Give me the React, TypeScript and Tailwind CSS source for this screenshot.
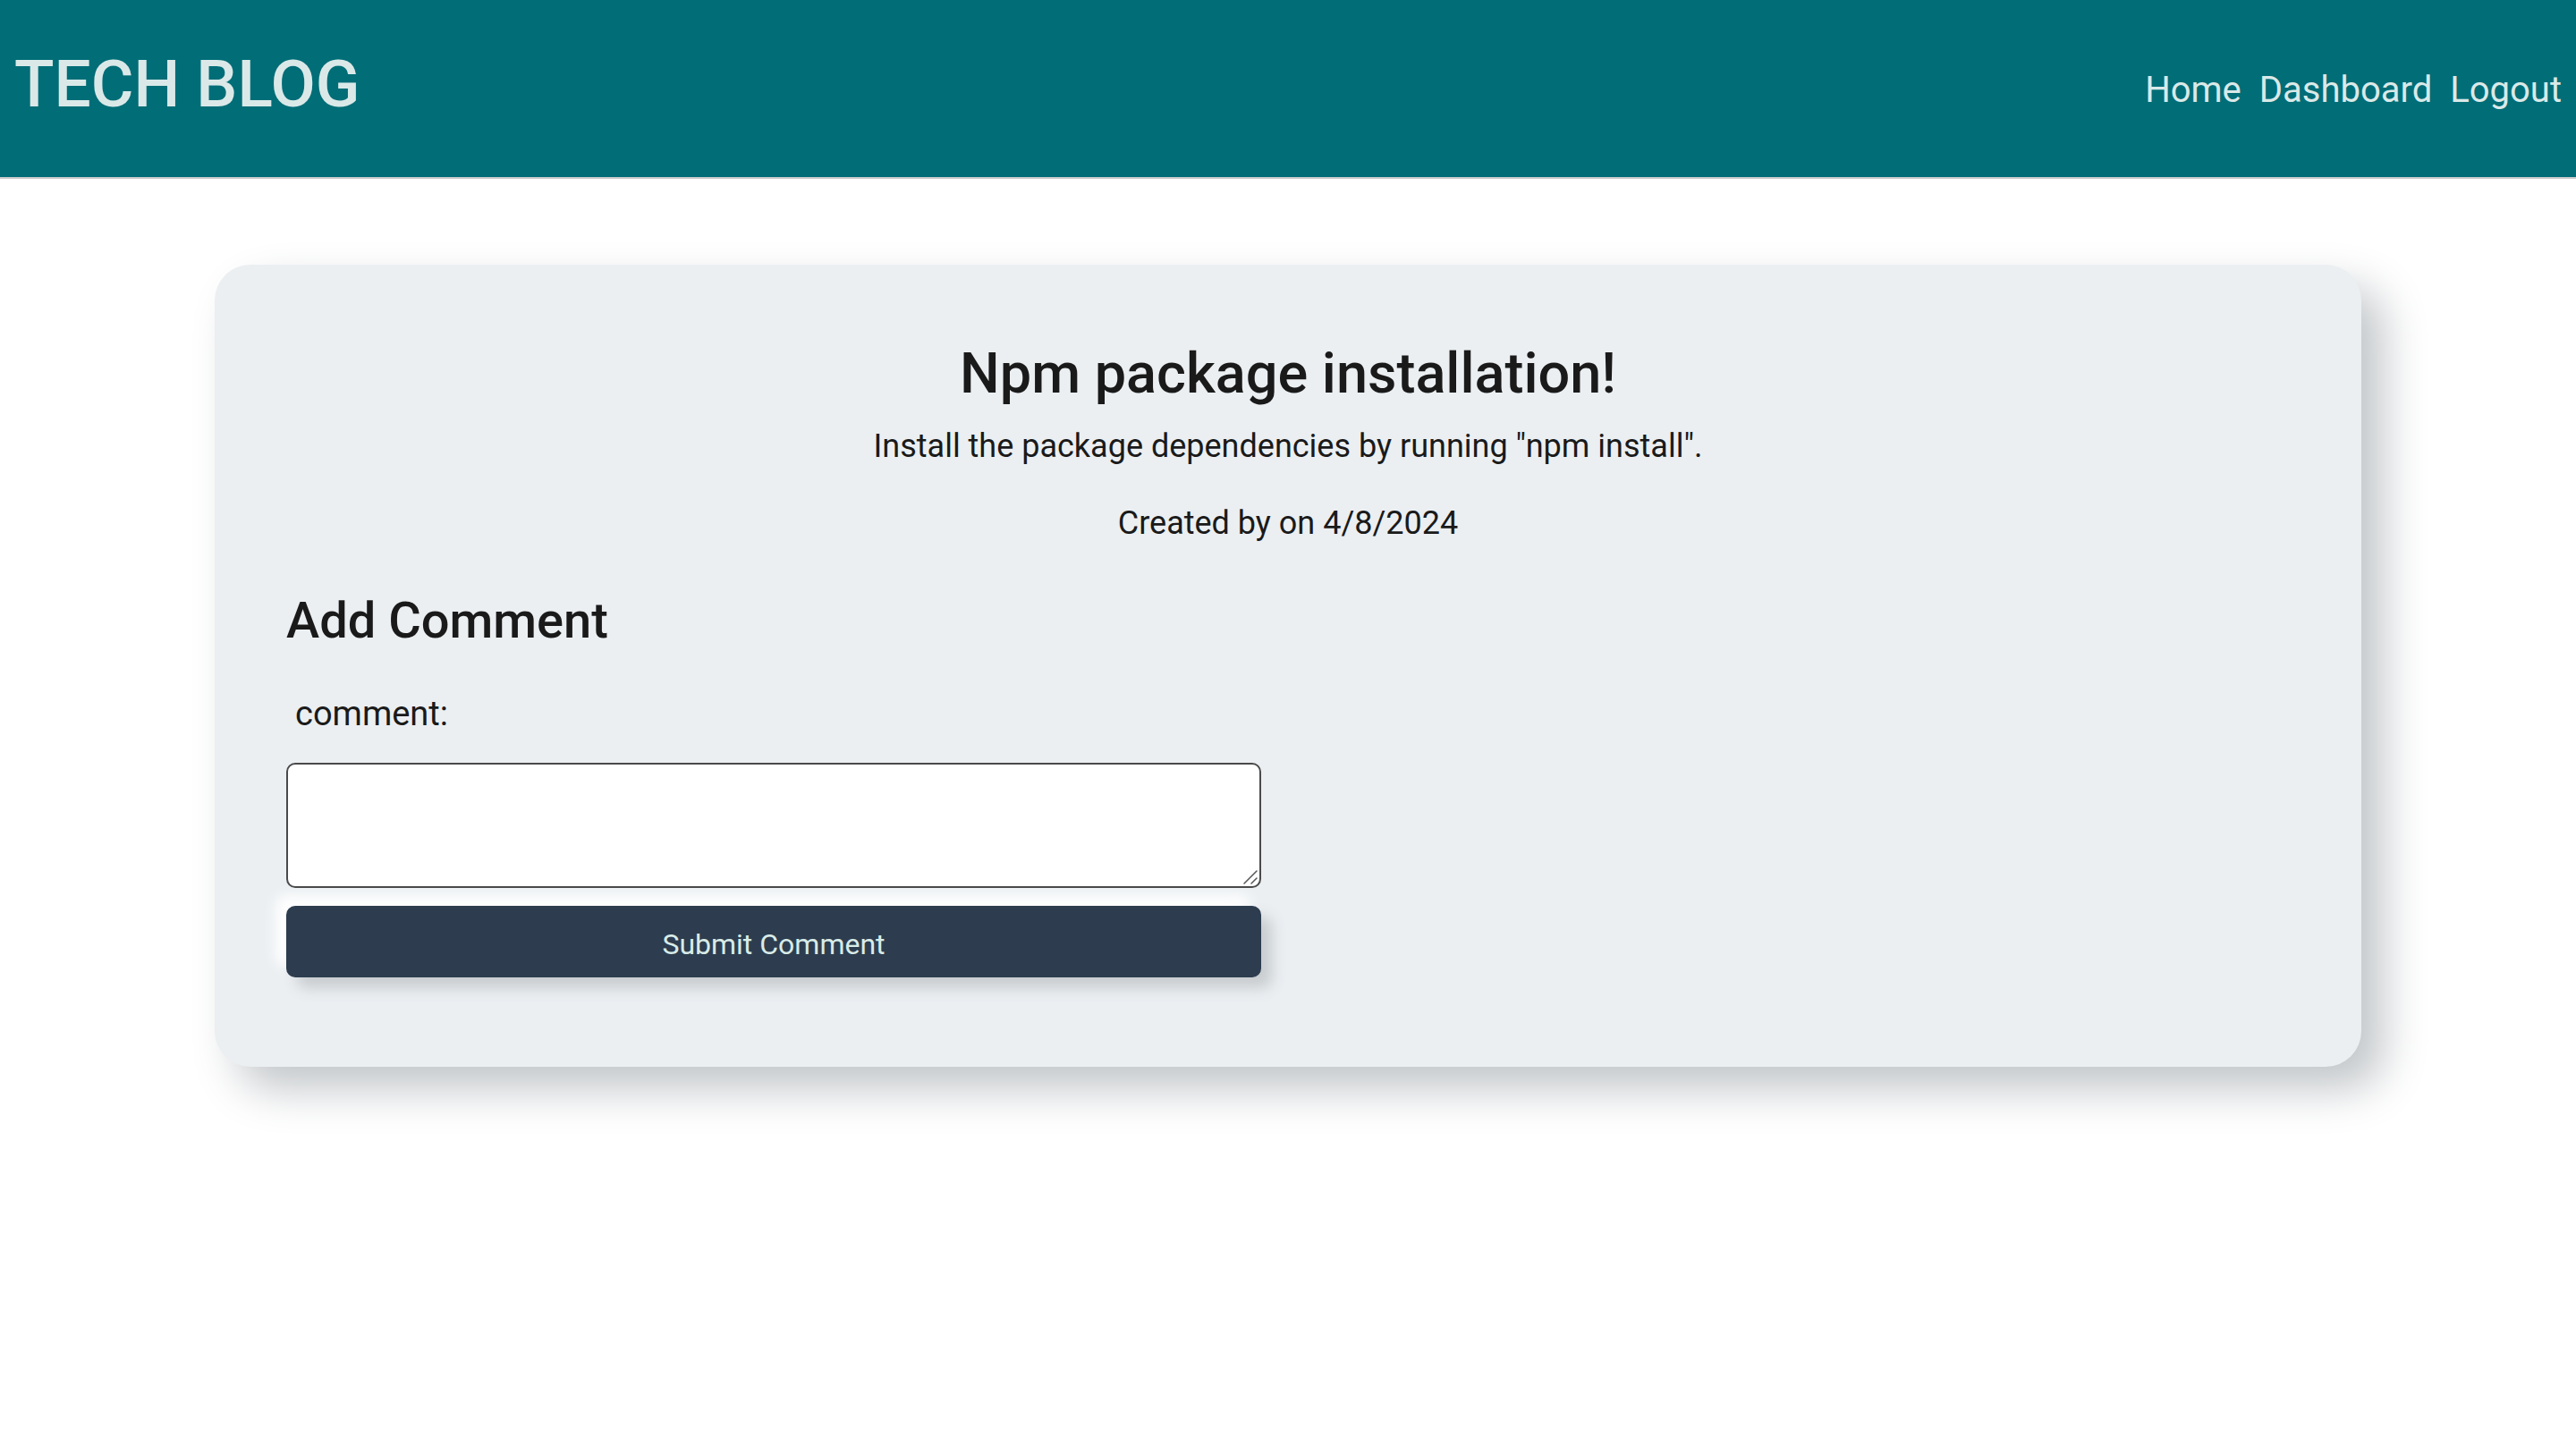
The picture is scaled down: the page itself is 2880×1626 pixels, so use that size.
import React from "react";

const links = ["Home", "Dashboard", "Logout"];

function ResizeGrip() {
  return (
    <svg
      className="pointer-events-none absolute right-1 bottom-1 size-4"
      viewBox="0 0 16 16"
      fill="none"
      stroke="#555555"
      strokeWidth="1.5"
      strokeLinecap="round"
      aria-hidden="true"
    >
      <path d="M1 15 15 1M9 15 15 9" />
    </svg>
  );
}

export default function App() {
  return (
    <div className="min-h-screen bg-white font-[Roboto,sans-serif] text-[#1a1a1a]">
      <header className="flex h-[200px] items-center justify-between border-b-2 border-[#cccccc] bg-[#006d77] px-4 text-[#dae9e8]">
        <h1 className="pb-2.5 text-[73px] leading-[90px] font-medium">TECH BLOG</h1>
        <nav className="flex gap-5 pt-1 text-[40px] leading-[60px]">
          {links.map((label) => (
            <a key={label} href="#">
              {label}
            </a>
          ))}
        </nav>
      </header>

      <main className="mx-auto mt-24 w-10/12 rounded-[40px] bg-[#ebeff2] px-20 pt-20 pb-[100px] shadow-[25px_25px_50px_#c2c6c9]">
        <section className="text-center text-[36px] leading-[54px]">
          <h2 className="mb-3 text-[63px] leading-[84px] font-medium">Npm package installation!</h2>
          <p className="mb-8">Install the package dependencies by running "npm install".</p>
          <p>Created by on 4/8/2024</p>
        </section>

        <form className="mt-12 flex w-[1090px] max-w-full flex-col" onSubmit={(e) => e.preventDefault()}>
          <h3 className="mb-7 text-[56px] leading-[68px] font-medium">Add Comment</h3>
          <label htmlFor="comment" className="mb-3 px-2.5 py-3.5 text-[38px] leading-[57px]">
            comment:
          </label>
          <div className="relative">
            <textarea
              id="comment"
              className="block h-[140px] w-full resize-none rounded-[10px] border-2 border-[#4a4a4a] bg-white px-3 py-2 text-[32px]"
            />
            <ResizeGrip />
          </div>
          <button
            type="submit"
            className="mt-5 h-20 rounded-[10px] bg-[#2d3d4f] pt-1.5 text-[32px] text-[#d9ebe8] shadow-[12px_12px_16px_#c8cccf,-12px_-12px_16px_#ffffff]"
          >
            Submit Comment
          </button>
        </form>
      </main>
    </div>
  );
}
